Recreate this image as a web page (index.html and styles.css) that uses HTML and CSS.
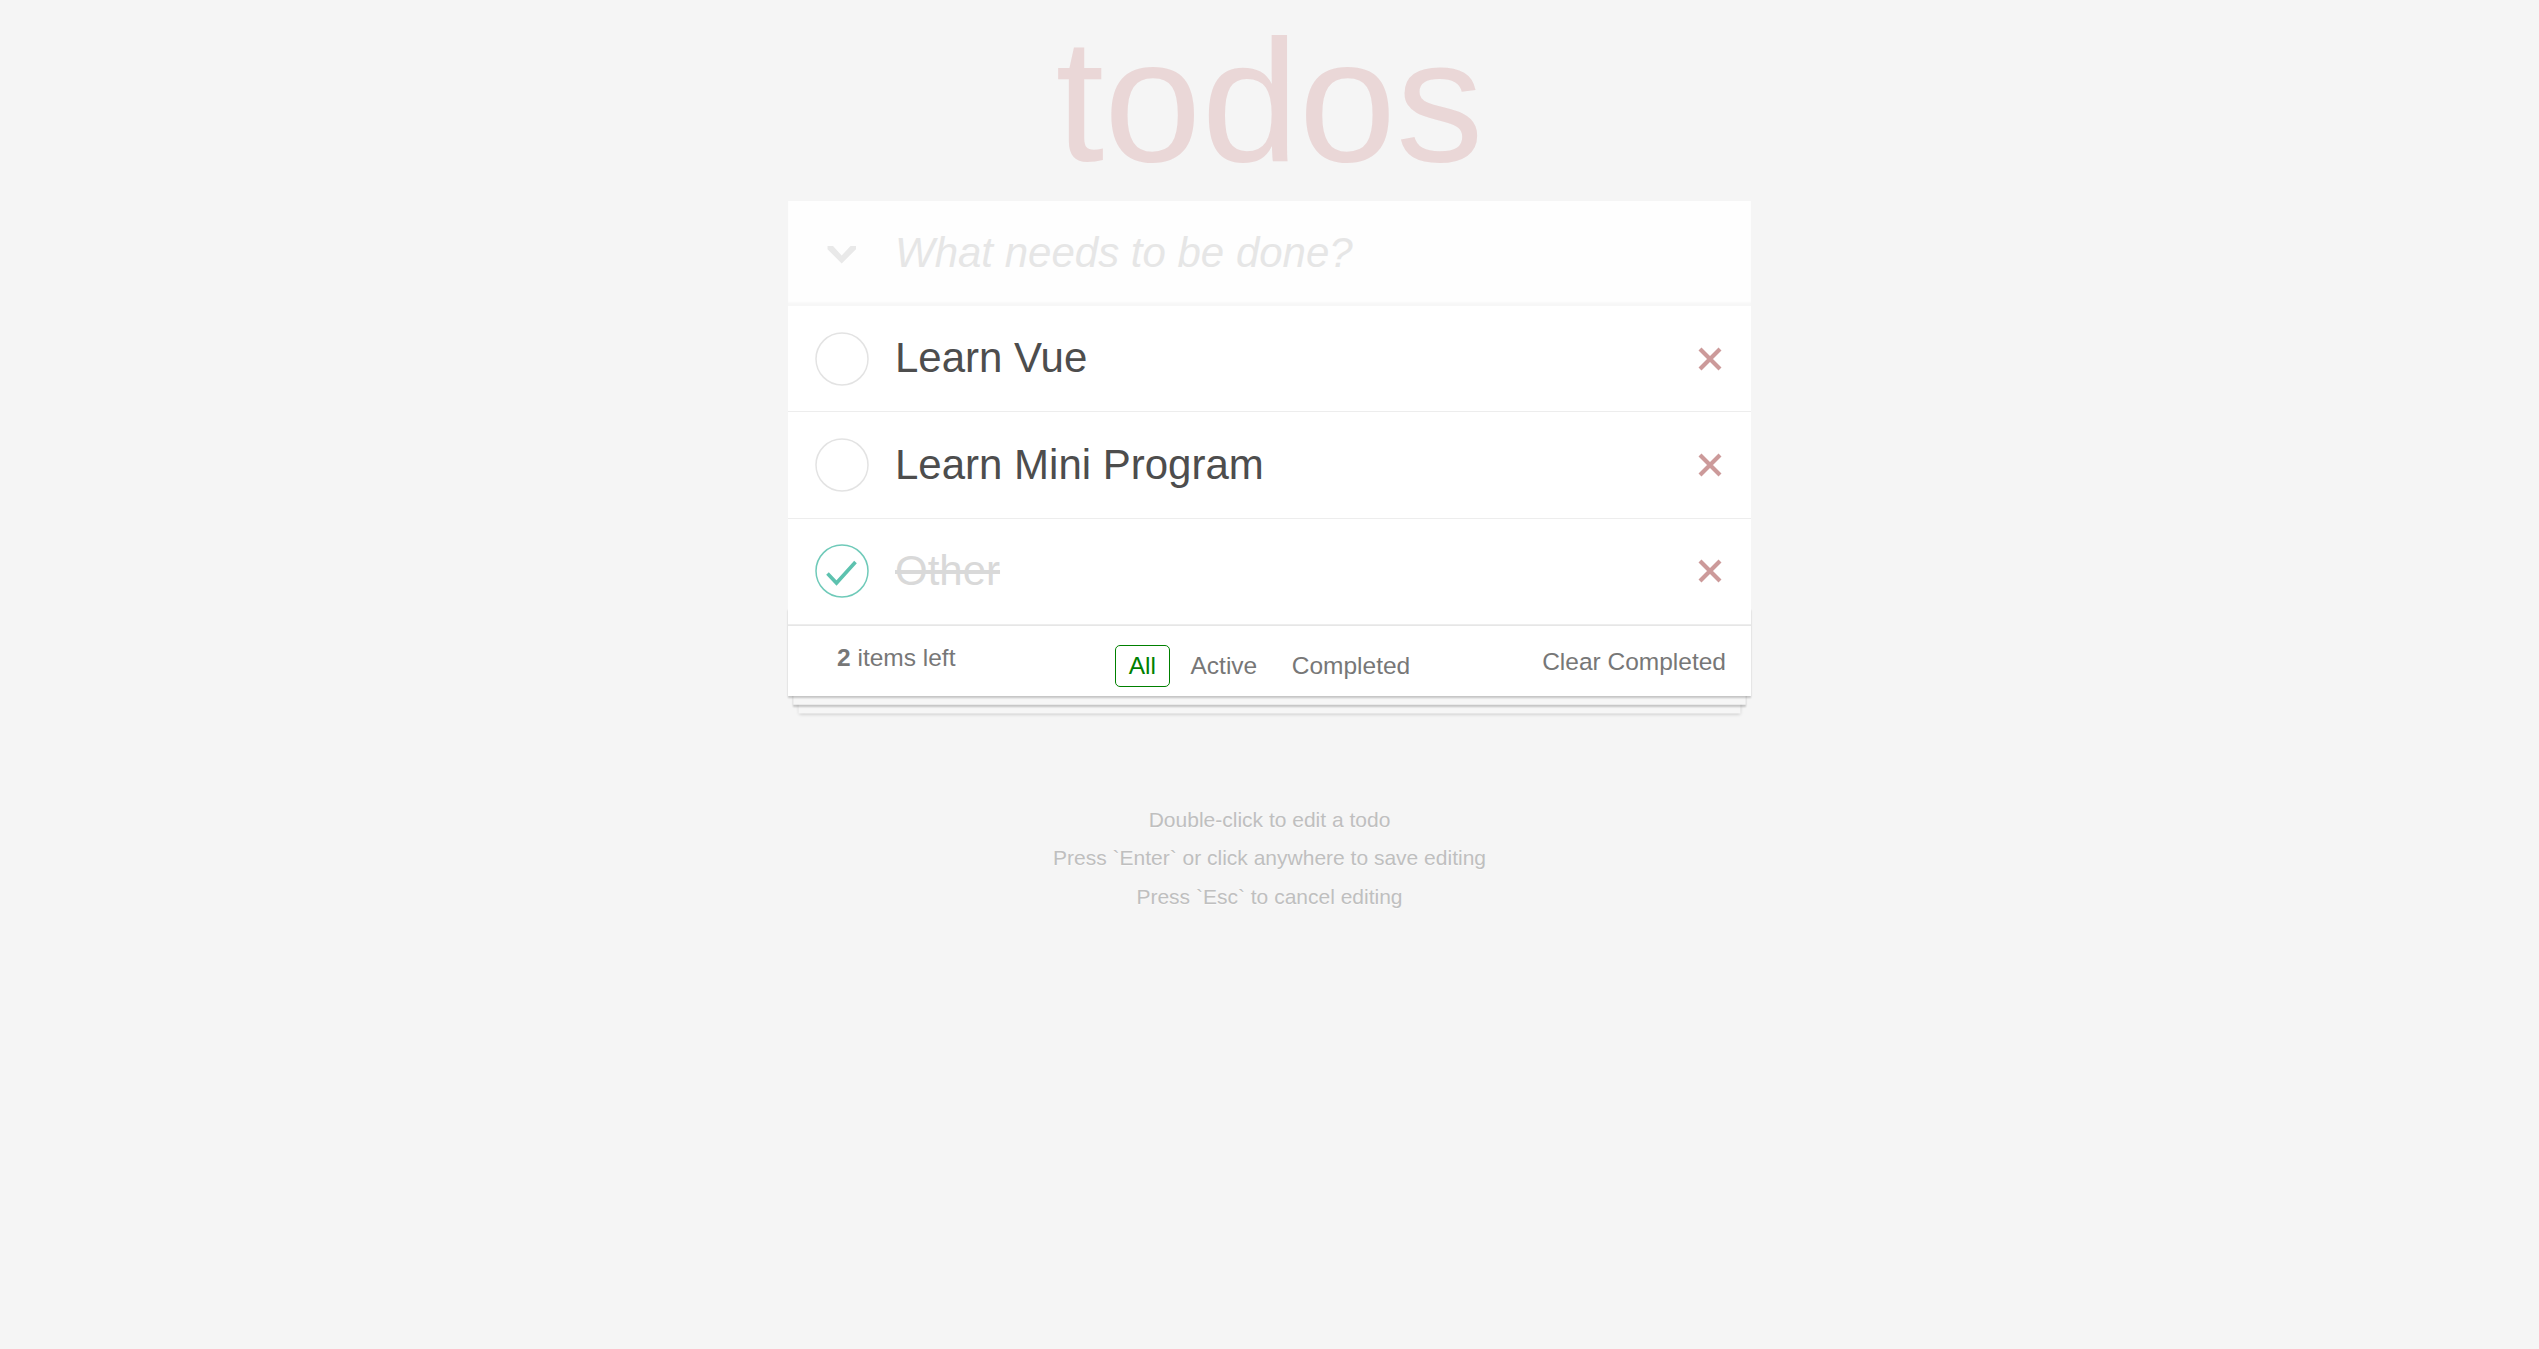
FILE: index.html
```html
<!DOCTYPE html>
<html lang="en">
<head>
<meta charset="utf-8">
<title>todos</title>
<link rel="stylesheet" href="styles.css">
</head>
<body>
<section class="todoapp">
  <h1 class="title">todos</h1>
  <div class="card">
    <header class="new-row">
      <span class="toggle-all">
        <svg width="30" height="18" viewBox="0 0 30 18"><polygon points="0.5,0 6,0 14.7,9.5 23.5,0 29,0 29,3.2 14.7,17.5 0.5,3.2" fill="#e9e9e9"/></svg>
      </span>
      <input class="new-todo" type="text" placeholder="What needs to be done?">
    </header>
    <ul class="todo-list">
      <li class="todo">
        <span class="toggle"><svg width="56" height="56" viewBox="0 0 56 56"><circle cx="28" cy="28" r="26" fill="none" stroke="#e3e3e3" stroke-width="1.5"/></svg></span>
        <label class="todo-label">Learn Vue</label>
        <button class="destroy"><svg width="24" height="24" viewBox="0 0 24 24"><path d="M2 2 L22 22 M22 2 L2 22" stroke="#cc9a9a" stroke-width="4.2" fill="none"/></svg></button>
      </li>
      <li class="todo">
        <span class="toggle"><svg width="56" height="56" viewBox="0 0 56 56"><circle cx="28" cy="28" r="26" fill="none" stroke="#e3e3e3" stroke-width="1.5"/></svg></span>
        <label class="todo-label">Learn Mini Program</label>
        <button class="destroy"><svg width="24" height="24" viewBox="0 0 24 24"><path d="M2 2 L22 22 M22 2 L2 22" stroke="#cc9a9a" stroke-width="4.2" fill="none"/></svg></button>
      </li>
      <li class="todo completed">
        <span class="toggle"><svg width="56" height="56" viewBox="0 0 56 56"><circle cx="28" cy="28" r="26" fill="none" stroke="#6fcab9" stroke-width="1.5"/><polyline points="13.5,30.5 22.5,40 41.5,19" fill="none" stroke="#5dc2af" stroke-width="3.6"/></svg></span>
        <label class="todo-label">Other</label>
        <button class="destroy"><svg width="24" height="24" viewBox="0 0 24 24"><path d="M2 2 L22 22 M22 2 L2 22" stroke="#cc9a9a" stroke-width="4.2" fill="none"/></svg></button>
      </li>
    </ul>
    <footer class="footer">
      <span class="todo-count"><strong>2</strong> items left</span>
      <ul class="filters">
        <li><a class="filter selected">All</a></li>
        <li><a class="filter">Active</a></li>
        <li><a class="filter">Completed</a></li>
      </ul>
      <button class="clear-completed">Clear Completed</button>
    </footer>
  </div>
</section>
<footer class="info">
  <p>Double-click to edit a todo</p>
  <p>Press `Enter` or click anywhere to save editing</p>
  <p>Press `Esc` to cancel editing</p>
</footer>
</body>
</html>
```

FILE: styles.css
```css
html, body {
  margin: 0;
  padding: 0;
}

body {
  background: #f5f5f5;
  color: #4d4d4d;
  font-family: "Liberation Sans", Arial, Helvetica, sans-serif;
  line-height: 1.4;
  padding-top: 13px;
}

.todoapp {
  width: 963px;
  margin: 0 auto;
}

.title {
  margin: 0 0 13px;
  font-size: 175px;
  line-height: 175px;
  font-weight: 100;
  text-align: center;
  color: rgba(175, 47, 47, 0.15);
}

.card {
  background: #fff;
}

.new-row {
  display: grid;
  grid-template-columns: 107px 1fr;
  align-items: center;
  height: 105px;
  background: rgba(0, 0, 0, 0.003);
  box-shadow: inset 0 -3.5px 1.75px rgba(0, 0, 0, 0.03);
}

.toggle-all {
  display: flex;
  justify-content: center;
  align-items: center;
  height: 18px;
  margin-top: 3px;
}

.toggle-all svg {
  display: block;
}

.new-todo {
  border: 0;
  outline: none;
  background: transparent;
  margin: 0;
  padding: 0;
  font-family: inherit;
  font-size: 42px;
  line-height: 1.4;
  color: #4d4d4d;
  width: 100%;
}

.new-todo::placeholder {
  font-style: italic;
  color: #e6e6e6;
  font-weight: 300;
}

.todo-list {
  list-style: none;
  margin: 0;
  padding: 0;
}

.todo {
  display: grid;
  grid-template-columns: 107px 1fr 83px;
  align-items: center;
  height: 105.3px;
  border-bottom: 1px solid #ededed;
}

.toggle {
  display: flex;
  justify-content: center;
  align-items: center;
}

.toggle svg {
  display: block;
}

.todo-label {
  font-size: 42px;
  line-height: 1.2;
  color: #4d4d4d;
  white-space: nowrap;
}

.completed .todo-label {
  color: #d9d9d9;
  text-decoration: line-through;
}

.destroy {
  display: flex;
  justify-content: center;
  align-items: center;
  background: none;
  border: 0;
  padding: 0;
  margin: 0;
  height: 24px;
}

.destroy svg {
  display: block;
}

.footer {
  position: relative;
  display: grid;
  grid-template-columns: 1fr auto 1fr;
  align-items: start;
  height: 70px;
  border-top: 1px solid #e6e6e6;
  color: #777;
  font-size: 24.5px;
}

.footer::before {
  content: "";
  position: absolute;
  left: 0;
  right: 0;
  bottom: 0;
  height: 87.5px;
  overflow: hidden;
  box-shadow:
    0 1.75px 1.75px rgba(0, 0, 0, 0.2),
    0 14px 0 -5.25px #f6f6f6,
    0 15.75px 1.75px -5.25px rgba(0, 0, 0, 0.2),
    0 28px 0 -10.5px #f6f6f6,
    0 29.75px 3.5px -10.5px rgba(0, 0, 0, 0.2);
}

.todo-count {
  justify-self: start;
  margin-top: 15px;
  padding-left: 49px;
  line-height: 34px;
  position: relative;
}

.todo-count strong {
  font-weight: bold;
}

.filters {
  list-style: none;
  display: flex;
  margin: 19.5px 0 0;
  padding: 0;
  position: relative;
}

.filter {
  display: block;
  margin: 0 3.25px;
  padding: 5px 13px;
  line-height: 30px;
  border: 1px solid transparent;
  border-radius: 5px;
  color: #777;
}

.filter.selected {
  color: #008000;
  border-color: #008000;
}

.clear-completed {
  justify-self: end;
  margin: 19.5px 25px 0 0;
  padding: 0;
  border: 0;
  background: none;
  font-family: inherit;
  font-size: 24.5px;
  line-height: 34px;
  color: #777;
  position: relative;
}

.info {
  margin: 113px auto 0;
  text-align: center;
  color: #bfbfbf;
  font-size: 21px;
  text-shadow: 0 1px 0 rgba(255, 255, 255, 0.5);
}

.info p {
  margin: 17.5px 0;
  line-height: 1;
}
```
